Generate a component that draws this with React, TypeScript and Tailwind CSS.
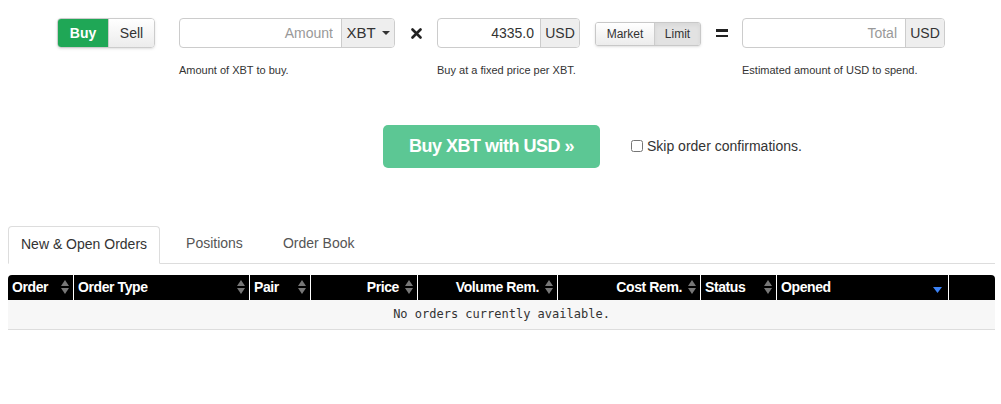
import React, { useState } from "react";

const SortIcon = ({ dir }: { dir?: "desc" }) => {
  if (dir === "desc") {
    return (
      <svg width="9" height="8" viewBox="0 0 9 8" className="shrink-0">
        <path d="M0 1 L9 1 L4.5 7 Z" fill="#3b82f6" />
      </svg>
    );
  }
  return (
    <svg width="8" height="14" viewBox="0 0 8 14" className="shrink-0">
      <path d="M4 0 L8 6 L0 6 Z" fill="#777" />
      <path d="M0 8 L8 8 L4 14 Z" fill="#777" />
    </svg>
  );
};

const columns: { label: string; w: string; align: "left" | "right"; sort?: "both" | "desc" | "none" }[] = [
  { label: "Order", w: "w-[65px]", align: "left", sort: "both" },
  { label: "Order Type", w: "w-[176px]", align: "left", sort: "both" },
  { label: "Pair", w: "w-[61px]", align: "left", sort: "both" },
  { label: "Price", w: "w-[107px]", align: "right", sort: "both" },
  { label: "Volume Rem.", w: "w-[140px]", align: "right", sort: "both" },
  { label: "Cost Rem.", w: "w-[143px]", align: "right", sort: "both" },
  { label: "Status", w: "w-[76px]", align: "left", sort: "both" },
  { label: "Opened", w: "w-[172px]", align: "left", sort: "desc" },
  { label: "", w: "flex-1", align: "left", sort: "none" },
];

export default function App() {
  const [side, setSide] = useState<"buy" | "sell">("buy");
  const [mode, setMode] = useState<"market" | "limit">("limit");
  const [tab, setTab] = useState(0);

  return (
    <div className="w-[1001px] h-[404px] bg-white text-[#333] font-['Liberation_Sans',Arial,sans-serif] overflow-hidden">
      {/* order form */}
      <div className="flex items-start pl-[57px] pt-[18px]">
        <div className="flex h-[30px] rounded-[4px] overflow-hidden border border-[#ccc] text-[14px] shadow-sm">
          <button
            onClick={() => setSide("buy")}
            className={`w-[50px] font-bold ${side === "buy" ? "bg-[#1fa756] text-white" : "bg-[#f4f4f4] text-[#333]"}`}
          >
            Buy
          </button>
          <button
            onClick={() => setSide("sell")}
            className={`w-[46px] border-l border-[#ccc] ${side === "sell" ? "bg-[#1fa756] text-white font-bold" : "bg-gradient-to-b from-white to-[#ececec] text-[#333]"}`}
          >
            Sell
          </button>
        </div>

        <div className="ml-[24px] flex flex-col">
          <div className="flex h-[30px] w-[216px] border border-[#ccc] rounded-[4px] overflow-hidden text-[14px]">
            <input
              placeholder="Amount"
              className="flex-1 min-w-0 px-2 text-right outline-none placeholder-[#999]"
            />
            <div className="w-[53px] border-l border-[#ccc] bg-[#eee] flex items-center justify-center gap-[6px] text-[15px]">
              XBT
              <span className="w-0 h-0 border-l-[4px] border-r-[4px] border-t-[4px] border-l-transparent border-r-transparent border-t-[#333]" />
            </div>
          </div>
          <p className="text-[11px] mt-[14px]">Amount of XBT to buy.</p>
        </div>

        <div className="w-[42px] h-[30px] flex items-center justify-center">
          <svg width="11" height="11" viewBox="0 0 11 11">
            <path d="M1.5 1.5 L9.5 9.5 M9.5 1.5 L1.5 9.5" stroke="#222" strokeWidth="2.6" strokeLinecap="round" />
          </svg>
        </div>

        <div className="flex flex-col">
          <div className="flex h-[30px] w-[143px] border border-[#ccc] rounded-[4px] overflow-hidden text-[14px]">
            <input
              defaultValue="4335.0"
              className="flex-1 min-w-0 px-[6px] text-right outline-none text-[#333]"
            />
            <div className="w-[39px] border-l border-[#ccc] bg-[#eee] flex items-center justify-center text-[14px]">
              USD
            </div>
          </div>
          <p className="text-[11px] mt-[14px]">Buy at a fixed price per XBT.</p>
        </div>

        <div className="ml-[15px] mt-[4px] flex h-[24px] rounded-[3px] overflow-hidden border border-[#c8c8c8] text-[12px] shadow-sm">
          <button
            onClick={() => setMode("market")}
            className={`w-[58px] ${mode === "market" ? "bg-[#e2e2e2] shadow-inner" : "bg-gradient-to-b from-white to-[#ececec]"}`}
          >
            Market
          </button>
          <button
            onClick={() => setMode("limit")}
            className={`w-[46px] border-l border-[#ccc] ${mode === "limit" ? "bg-[#e2e2e2] shadow-inner" : "bg-gradient-to-b from-white to-[#ececec]"}`}
          >
            Limit
          </button>
        </div>

        <div className="w-[41px] h-[30px] flex flex-col items-center justify-center gap-[3px]">
          <span className="block w-[12px] h-[2.5px] bg-[#222]" />
          <span className="block w-[12px] h-[2.5px] bg-[#222]" />
        </div>

        <div className="flex flex-col">
          <div className="flex h-[30px] w-[203px] border border-[#ccc] rounded-[4px] overflow-hidden text-[14px]">
            <input
              placeholder="Total"
              className="flex-1 min-w-0 px-2 text-right outline-none placeholder-[#999]"
            />
            <div className="w-[39px] border-l border-[#ccc] bg-[#eee] flex items-center justify-center">
              USD
            </div>
          </div>
          <p className="text-[11px] mt-[14px]">Estimated amount of USD to spend.</p>
        </div>
      </div>

      {/* submit */}
      <div className="flex items-center mt-[46px] pl-[383px]">
        <button className="w-[217px] h-[43px] rounded-[5px] bg-[#5cc794] text-white font-bold text-[18px] tracking-[-0.5px]">
          Buy XBT with USD »
        </button>
        <label className="ml-[31px] flex items-center gap-[4px] text-[14px] text-[#333]">
          <input type="checkbox" className="w-[12px] h-[12px] m-0" />
          Skip order confirmations.
        </label>
      </div>

      {/* tabs */}
      <div className="ml-[8px] mr-[6px] mt-[58px] flex items-end border-b border-[#ddd] h-[38px] text-[14px]">
        {["New & Open Orders", "Positions", "Order Book"].map((t, i) => (
          <button
            key={t}
            onClick={() => setTab(i)}
            className={
              tab === i
                ? "h-[38px] px-[12px] -mb-px border border-[#ddd] border-b-white bg-white rounded-t-[4px] text-[#333]"
                : "h-[38px] px-[14px] ml-[12px] text-[#555]"
            }
          >
            {t}
          </button>
        ))}
      </div>

      {/* orders table */}
      <div className="ml-[8px] mr-[6px] mt-[11px]">
        <div className="flex h-[25px] bg-black text-white text-[14px] font-semibold tracking-[-0.4px] rounded-t-[4px] overflow-hidden">
          {columns.map((c, i) => (
            <div
              key={i}
              className={`${c.w} flex items-center gap-[6px] px-[4px] ${i > 0 ? "border-l border-white" : ""} ${c.align === "right" ? "justify-end" : "justify-between"}`}
            >
              <span>{c.label}</span>
              {c.sort === "both" && <SortIcon />}
              {c.sort === "desc" && <span className="mt-[6px] mr-[2px]"><SortIcon dir="desc" /></span>}
            </div>
          ))}
        </div>
        <div className="h-[30px] bg-[#f7f7f7] border-b border-[#ddd] flex items-center justify-center font-['DejaVu_Sans_Mono',monospace] text-[12px] text-[#333]">
          No orders currently available.
        </div>
      </div>
    </div>
  );
}
